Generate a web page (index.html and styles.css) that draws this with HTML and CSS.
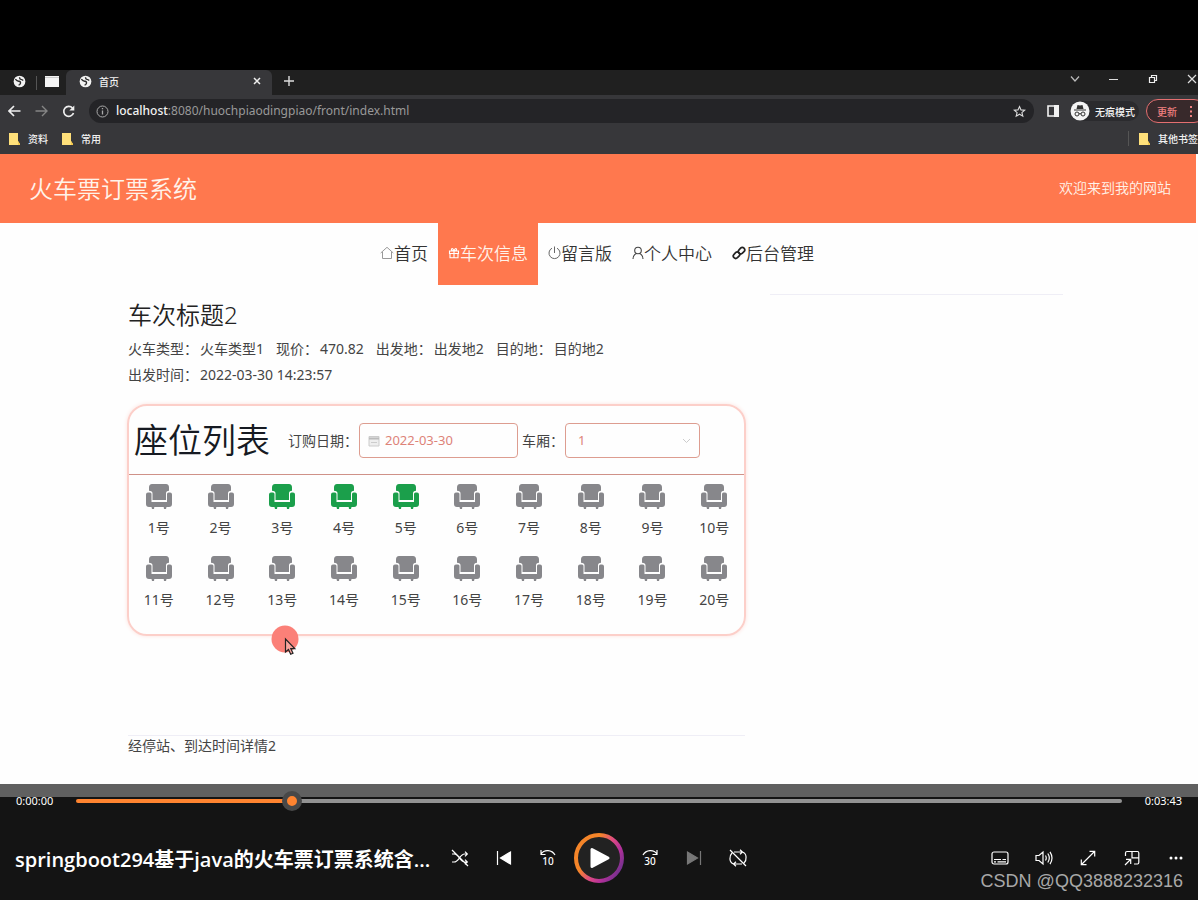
FILE: index.html
```html
<!DOCTYPE html>
<html lang="zh-CN">
<head>
<meta charset="utf-8">
<title>火车票订票系统</title>
<link rel="stylesheet" href="styles.css">
</head>
<body>
<svg class="defs" aria-hidden="true">
  <symbol id="globe" viewBox="0 0 14 14"><circle cx="7" cy="7" r="6.300" fill="#f2f2f2"/><path d="M2.500 4.500q2 2.500 4 2.200 2 .3 1.500 2.300-.5 1.500-2 2M7 2.500q0 2 1.500 2.200T11 6" fill="none" stroke="#2b2b2b" stroke-width="1.500"/></symbol>
  <symbol id="folder" viewBox="0 0 11 13"><path d="M0 1h9v8l2 3v1H0z" fill="#ffe07a"/><path d="M9 9v4h2v-1z" fill="#f5c84c"/></symbol>
  <symbol id="seat" viewBox="0 0 26 25"><path d="M6 0h14q3 0 3 3.500v3.300q-3 0-3 2.700v6.500H6.500V9.500q0-2.700-3.500-2.700V3.500Q3 0 6 0z"/><path d="M2 8.500h2q1.500 0 1.500 1.500v8h15.500v-8q0-1.500 1.500-1.500h1.500q2 0 2 2V20q0 3-3 3h-2.500l-.5 2h-2l-.3-2H8.300L8 25H6l-.5-2H3q-3 0-3-3v-9.500q0-2 2-2z"/></symbol>
</svg>

<div class="letterbox"></div>

<div class="browser">
  <div class="tabs">
    <div class="pinned"><svg width="13" height="13"><use href="#globe"/></svg></div>
    <div class="pinned second"><svg width="14" height="11" viewBox="0 0 14 11"><path d="M0 0h14v11H0z" fill="#f4f4f4"/><path d="M0 1.500h14" stroke="#ccc"/></svg></div>
    <div class="tab"><svg width="13" height="13"><use href="#globe"/></svg><span>首页</span>
      <button class="plain close" aria-label="关闭"><svg width="8" height="8" viewBox="0 0 8 8"><path d="M1 1l6 6M7 1L1 7" stroke="#eee" stroke-width="1.500"/></svg></button></div>
    <button class="plain add" aria-label="新标签页"><svg width="12" height="12" viewBox="0 0 12 12"><path d="M6 1v10M1 6h10" stroke="#ddd" stroke-width="1.400"/></svg></button>
    <div class="window">
      <button class="plain" aria-label="搜索标签"><svg width="10" height="10" viewBox="0 0 10 10"><path d="M1 2.500l4 4.500 4-4.500" fill="none" stroke="#bbb" stroke-width="1.200"/></svg></button>
      <button class="plain" aria-label="最小化"><svg width="10" height="10" viewBox="0 0 10 10"><path d="M0 5.500h9" stroke="#ddd"/></svg></button>
      <button class="plain" aria-label="还原"><svg width="10" height="10" viewBox="0 0 10 10"><path d="M1.500 3.500h5v5h-5zM3.500 3V1.500h5v5H7" fill="none" stroke="#eee" stroke-width="1.200"/></svg></button>
      <button class="plain" aria-label="关闭窗口"><svg width="10" height="10" viewBox="0 0 10 10"><path d="M1 1l8 8M9 1L1 9" stroke="#ddd" stroke-width="1.200"/></svg></button>
    </div>
  </div>
  <div class="toolbar">
    <button class="plain" aria-label="后退"><svg width="13" height="12" viewBox="0 0 13 12"><path d="M12.500 6H1.500M6 1L1 6l5 5" fill="none" stroke="#eee" stroke-width="1.700"/></svg></button>
    <button class="plain" aria-label="前进"><svg width="13" height="12" viewBox="0 0 13 12"><path d="M.5 6h11M7 1l5 5-5 5" fill="none" stroke="#858585" stroke-width="1.400"/></svg></button>
    <button class="plain" aria-label="刷新"><svg width="13" height="13" viewBox="0 0 13 13"><path d="M10.500 3A5 5 0 1 0 11.500 8" fill="none" stroke="#eee" stroke-width="1.700"/><path d="M12.300.5v5H7.300z" fill="#eee"/></svg></button>
    <div class="address">
      <svg width="13" height="13" viewBox="0 0 13 13"><circle cx="6.500" cy="6.500" r="5.500" fill="none" stroke="#aaa"/><path d="M6.500 5.500v4M6.500 3v1.300" stroke="#aaa" stroke-width="1.300"/></svg>
      <span class="url"><b>localhost</b>:8080/huochpiaodingpiao/front/index.html</span>
      <svg width="13" height="13" viewBox="0 0 13 13"><path d="M6.500 1.500l1.500 3.400 3.700.3-2.800 2.400.9 3.600-3.300-2-3.300 2 .9-3.600-2.800-2.400 3.700-.3z" fill="none" stroke="#ddd" stroke-width="1.100"/></svg>
    </div>
    <svg width="12" height="12" viewBox="0 0 12 12"><path d="M1 1h10v10H1z" fill="none" stroke="#f2f2f2" stroke-width="1.600"/><path d="M7 0h5v12H7z" fill="#f2f2f2"/></svg>
    <div class="incognito"><svg width="20" height="20" viewBox="0 0 20 20"><circle cx="10" cy="10" r="9.500" fill="#f4f4f4"/><path d="M6.500 8l1-4 2.500.6L12.500 4l1 4zM4 8.500h12v1H4z" fill="#333"/><path d="M9 13q1-1 2 0" fill="none" stroke="#333"/><circle cx="7" cy="13" r="2" fill="none" stroke="#333"/><circle cx="13" cy="13" r="2" fill="none" stroke="#333"/></svg><span>无痕模式</span></div>
    <button class="update"><span>更新</span><svg width="4" height="13" viewBox="0 0 4 13"><path d="M1 1h2v2H1zM1 5.500h2v2H1zM1 10h2v2H1z" fill="#f08080"/></svg></button>
  </div>
  <div class="bookmarks">
    <a href="#"><svg width="11" height="13"><use href="#folder"/></svg>资料</a>
    <a href="#"><svg width="11" height="13"><use href="#folder"/></svg>常用</a>
    <a href="#" class="other"><svg width="11" height="13"><use href="#folder"/></svg>其他书签</a>
  </div>
</div>

<div class="site">
  <header class="banner"><h1>火车票订票系统</h1><span>欢迎来到我的网站</span></header>
  <nav class="menu">
    <a href="#"><svg width="14" height="14" viewBox="0 0 14 14"><path d="M.7 7L7 1.300 13.300 7M2.500 6v6.500h9V6" fill="none" stroke="#999"/></svg>首页</a>
    <a href="#" class="active"><svg width="12" height="12" viewBox="0 0 12 12"><path d="M1.500 4h9v2.500h-9zM2 6.500h8v4.300H2zM6 4v7M6 4Q3 4 3.500 2 5 .8 6 4 7 .8 8.500 2 9 4 6 4" fill="none" stroke="#fff" stroke-width="1.100"/></svg>车次信息</a>
    <a href="#"><svg width="13" height="14" viewBox="0 0 13 14"><path d="M4 2.200a5.500 5.500 0 1 0 5 0M6.500.5v6.500" fill="none" stroke="#666"/></svg>留言版</a>
    <a href="#"><svg width="12" height="14" viewBox="0 0 12 14"><circle cx="6" cy="4.500" r="3.300" fill="none" stroke="#444" stroke-width="1.100"/><path d="M1 13q0-4 3.500-5.500M11 13q0-4-3.500-5.500" fill="none" stroke="#444" stroke-width="1.100"/></svg>个人中心</a>
    <a href="#"><svg width="14" height="14" viewBox="0 0 14 14"><g fill="none" stroke="#222" stroke-width="1.700"><rect x="6" y="2.300" width="7" height="4.800" rx="2.400" transform="rotate(-45 9.500 4.700)"/><rect x="1" y="6.800" width="7" height="4.800" rx="2.400" transform="rotate(-45 4.500 9.200)"/></g></svg>后台管理</a>
  </nav>
  <main class="content">
    <section class="detail">
      <h2>车次标题2</h2>
      <dl class="facts">
        <div><dt>火车类型：</dt><dd>火车类型1</dd></div>
        <div><dt>现价：</dt><dd>470.82</dd></div>
        <div><dt>出发地：</dt><dd>出发地2</dd></div>
        <div><dt>目的地：</dt><dd>目的地2</dd></div>
        <div class="wide"><dt>出发时间：</dt><dd>2022-03-30 14:23:57</dd></div>
      </dl>
      <div class="card">
        <form class="filters">
          <h3>座位列表</h3>
          <label for="date">订购日期：</label>
          <div class="field date"><svg width="12" height="12" viewBox="0 0 12 12"><path d="M1 1.500h10v9.500H1z" fill="#eee" stroke="#ccc"/><path d="M1 3.500h10" stroke="#bbb" stroke-width="2"/><path d="M3 7.500h6" stroke="#ccc"/></svg><input id="date" type="text" value="2022-03-30"></div>
          <label for="coach">车厢：</label>
          <div class="field coach"><select id="coach"><option>1</option></select><svg width="9" height="6" viewBox="0 0 9 6"><path d="M1 1l3.500 3.500L8 1" fill="none" stroke="#ccc"/></svg></div>
        </form>
        <ol class="seats">
          <li><svg><use href="#seat"/></svg>1号</li><li><svg><use href="#seat"/></svg>2号</li><li class="free"><svg><use href="#seat"/></svg>3号</li><li class="free"><svg><use href="#seat"/></svg>4号</li><li class="free"><svg><use href="#seat"/></svg>5号</li><li><svg><use href="#seat"/></svg>6号</li><li><svg><use href="#seat"/></svg>7号</li><li><svg><use href="#seat"/></svg>8号</li><li><svg><use href="#seat"/></svg>9号</li><li><svg><use href="#seat"/></svg>10号</li>
          <li><svg><use href="#seat"/></svg>11号</li><li><svg><use href="#seat"/></svg>12号</li><li><svg><use href="#seat"/></svg>13号</li><li><svg><use href="#seat"/></svg>14号</li><li><svg><use href="#seat"/></svg>15号</li><li><svg><use href="#seat"/></svg>16号</li><li><svg><use href="#seat"/></svg>17号</li><li><svg><use href="#seat"/></svg>18号</li><li><svg><use href="#seat"/></svg>19号</li><li><svg><use href="#seat"/></svg>20号</li>
        </ol>
        <svg class="pointer" width="28" height="32" viewBox="0 0 28 32"><circle cx="14" cy="14" r="13.500" fill="#fb8078"/><path d="M14.500 14v13l3-2.500 2.200 4.800 2.300-1-2.200-4.600h4z" fill="#f9a49d" stroke="#222" stroke-width="1.200"/></svg>
      </div>
      <p class="stops">经停站、到达时间详情2</p>
    </section>
    <aside class="side"></aside>
  </main>
</div>

<footer class="player">
  <div class="seek">
    <span>0:00:00</span>
    <input type="range" min="0" max="1000" value="201" aria-label="播放进度">
    <span>0:03:43</span>
  </div>
  <div class="controls">
    <div class="title">springboot294基于java的火车票订票系统含...</div>
    <div class="group">
      <button class="plain" aria-label="随机播放"><svg width="18" height="18" viewBox="0 0 18 18"><path d="M1 5h2C8 5 9 13 13.500 13H16M1 13h2C8 13 9 5 13.500 5H16M14 2.700L16.300 5 14 7.300M14 10.700l2.300 2.300-2.300 2.300M1 1l16 16"/></svg></button>
      <button class="plain" aria-label="上一个"><svg width="16" height="16" viewBox="0 0 16 16"><path d="M1.500 1v14"/><path d="M14.500 2v12L4.500 8z" fill="#fff"/></svg></button>
      <button class="plain" aria-label="后退10秒"><svg width="18" height="18" viewBox="0 0 18 18"><path d="M2 1v4.500h4.500M2 5.200C5 0 13 .5 16 6"/><text x="9" y="16">10</text></svg></button>
      <button class="plain play" aria-label="播放"><svg width="50" height="50" viewBox="0 0 50 50"><defs><linearGradient id="ring" x1="0" y1=".2" x2="1" y2=".8"><stop offset=".3" stop-color="#f58529"/><stop offset=".55" stop-color="#dd4a83"/><stop offset=".75" stop-color="#b3309a"/><stop offset="1" stop-color="#6b318c"/></linearGradient></defs><circle cx="25" cy="25" r="23" fill="#222" stroke="url(#ring)" stroke-width="4"/><path d="M18 16.500v17L34 25z" fill="#fff" stroke="#fff" stroke-width="3" stroke-linejoin="round"/></svg></button>
      <button class="plain" aria-label="前进30秒"><svg width="18" height="18" viewBox="0 0 18 18"><path d="M16 1v4.500h-4.500M16 5.200C13 0 5 .5 2 6"/><text x="9" y="16">30</text></svg></button>
      <button class="plain dim" aria-label="下一个"><svg width="16" height="16" viewBox="0 0 16 16"><path d="M14.500 1v14"/><path d="M1.500 2v12l10-6z" fill="#777"/></svg></button>
      <button class="plain" aria-label="重复"><svg width="18" height="18" viewBox="0 0 18 18"><path d="M5 3h8.500M11 .8L13.500 3 11 5.300M13.500 3C18 4.500 18 11 15 14M13 15H4.500M7 12.700L4.500 15 7 17.200M4.500 15C0 13.500 0 7 3 4M1 1l16 16"/></svg></button>
    </div>
    <div class="group end">
      <button class="plain" aria-label="字幕"><svg width="18" height="14" viewBox="0 0 18 14"><rect x="1" y="1" width="16" height="12" rx="2"/><path d="M3 8.500h7M11.500 8.500H15M3 10.800h2M6.500 10.800H15"/></svg></button>
      <button class="plain" aria-label="音量"><svg width="18" height="16" viewBox="0 0 18 16"><path d="M1 5.500h3L8 2v12l-4-3.500H1zM10.500 5.500q1.500 2.500 0 5M12.800 3.500q3 4.500 0 9M15 1.800q4 6.200 0 12.400"/></svg></button>
      <button class="plain" aria-label="全屏"><svg width="16" height="16" viewBox="0 0 16 16"><path d="M1.500 14.500l13-13M9.500 1.300h5.200v5.200M1.300 9.500v5.200h5.200"/></svg></button>
      <button class="plain" aria-label="迷你播放器"><svg width="16" height="16" viewBox="0 0 16 16"><path d="M1.500 6V3q0-1.500 1.500-1.500h10.500q1.300 0 1.300 1.500v9.500q0 1.500-1.300 1.500H10M8 1.500v6.300h6.800M1 15l5.500-5.500M2 9.300h4.700V14"/></svg></button>
      <button class="plain" aria-label="更多"><svg width="14" height="4" viewBox="0 0 14 4"><g fill="#fff" stroke="none"><circle cx="2" cy="2" r="1.500"/><circle cx="7" cy="2" r="1.500"/><circle cx="12" cy="2" r="1.500"/></g></svg></button>
    </div>
  </div>
  <div class="credit">CSDN @QQ3888232316</div>
</footer>
</body>
</html>
```
FILE: styles.css
```css
* { box-sizing: border-box; }
body {
  margin: 0;
  min-height: 100vh;
  display: flex;
  flex-direction: column;
  background: #141414;
  font-family: "Noto Sans", "Noto Sans CJK SC", sans-serif;
  font-size: 14px;
  color: #444;
}
.defs { display: none; }
svg { flex: none; display: block; }
a { color: inherit; text-decoration: none; }
h1, h2, h3, dl, dd, p, ol { margin: 0; padding: 0; font-weight: 400; }
.plain { border: 0; padding: 0; background: none; display: flex; align-items: center; justify-content: center; }
.letterbox { height: 70px; background: #000; }

.browser { background: #37373a; color: #f2f2f2; font-size: 10px; font-weight: 500; overflow: hidden; }
.tabs { display: flex; align-items: center; height: 25px; background: #202020; }
.pinned { padding: 0 0 3px 13px; width: 36px; }
.second { width: 30px; padding-left: 8px; border-left: 1px solid #555; }
.tab { display: flex; align-items: center; gap: 7px; width: 206px; height: 25px; padding: 0 11px 3px 13px; background: #37373a; border-radius: 6px 6px 0 0; }
.close { margin-left: auto; }
.add { margin-left: 11px; padding-bottom: 3px; }
.window { display: flex; align-self: flex-start; gap: 29px; margin-left: auto; height: 18px; margin-right: 1px; }
.toolbar { display: flex; align-items: center; gap: 14px; height: 33px; padding: 0 0 1px 8px; margin-right: -8px; }
.address { flex: 1; display: flex; align-items: center; gap: 7px; height: 24px; padding: 0 8px 0 7px; margin-right: -1px; background: #242427; border-radius: 12px; font-size: 12px; line-height: 20px; }
.url { flex: 1; padding-bottom: 1px; color: #999; font-weight: 400; white-space: nowrap; }
.url b { font-weight: 500; color: #f2f2f2; }
.incognito { display: flex; align-items: center; gap: 5px; margin-left: -3px; white-space: nowrap; background: #2b2b2e; border-radius: 10px; padding-right: 4px; }
.update { display: flex; align-items: center; gap: 12px; margin-left: -7px; width: 60px; height: 24px; padding: 0 10px; border: 1px solid #e46f70; border-radius: 12px; background: #38292b; color: #f08080; font: inherit; white-space: nowrap; }
.bookmarks { display: flex; align-items: center; gap: 14px; height: 26px; padding: 0 0 5px 9px; }
.bookmarks a { display: flex; align-items: center; gap: 8px; white-space: nowrap; }
.bookmarks .other { margin-left: auto; padding-left: 10px; border-left: 1px solid #555; }

.site { flex: 1; background: #fefefe; }
.banner { display: flex; align-items: center; justify-content: space-between; height: 69px; margin-right: 2px; padding: 0 25px 3px 29px; background: #ff784e; color: #fff3ea; }
.banner h1 { font-size: 24px; font-weight: 350; }
.banner span { font-size: 14px; font-weight: 350; }
.menu { display: flex; justify-content: center; height: 62px; padding-right: 4px; font-size: 17px; font-weight: 350; color: #333; }
.menu a { display: flex; align-items: center; padding: 0 10px 3px; }
.menu .active { background: #ff784e; color: #fff3ea; }
.content { display: grid; grid-template-columns: 617fr 293fr; gap: 25px; padding: 9px 135px 24px 128px; }
.side { border-top: 1px solid #efeef6; }
.detail h2 { font-size: 24px; line-height: 36px; padding-top: 3px; font-weight: 350; color: #222; }
.facts { display: flex; flex-wrap: wrap; column-gap: 12px; padding-top: 3px; line-height: 26px; }
.facts div { display: flex; white-space: nowrap; }
.facts dd { margin-left: 2px; }
.facts .wide { width: 100%; }
.card { position: relative; margin: 16px -1px 0; padding-bottom: 15px; border: 2px solid #fccfc9; border-radius: 20px; box-shadow: 0 0 4px #fde2de; }
.filters { display: flex; align-items: center; height: 69px; padding: 0 5px; border-bottom: 1px solid #cf9188; white-space: nowrap; }
.filters h3 { font-size: 34px; font-weight: 350; color: #161a22; margin-right: 18px; padding-bottom: 3px; }
.filters label { margin-right: 1px; }
.field { position: relative; height: 35px; color: #dd8378; }
.field input, .field select { width: 100%; height: 100%; border: 1px solid #dd9d90; border-radius: 4px; background: none; color: inherit; font: inherit; font-size: 13px; appearance: none; }
.date { width: 159px; margin-right: 4px; }
.coach { width: 135px; }
.field input { padding: 0 0 0 25px; }
.field select { padding: 0 12px; }
.field svg { position: absolute; top: 12px; left: 9px; }
.coach svg { left: auto; right: 9px; top: 15px; }
.seats { display: grid; grid-template-columns: repeat(10, 1fr); margin: 0 -1px; list-style: none; }
.seats li { display: flex; flex-direction: column; align-items: center; gap: 8px; height: 72px; padding-top: 9px; line-height: 22px; }
.seats svg { width: 26px; height: 25px; fill: #87878b; }
.seats .free svg { fill: #1b9f4b; }
.pointer { position: absolute; left: 142px; bottom: -23px; }
.stops { margin-top: 99px; border-top: 1px solid #efeef6; line-height: 20px; }

.player { position: relative; height: 116px; background: linear-gradient(#606060 13px, #141414 13px); color: #fff; }
.seek { display: flex; align-items: center; gap: 23px; height: 33px; padding: 0 16px; font-size: 11px; }
.seek input { flex: 1; min-width: 0; height: 20px; margin: 0; appearance: none; background: none; }
.seek input::-webkit-slider-runnable-track { height: 4px; border-radius: 2px; background: linear-gradient(90deg, #ff8430 20%, #929292 20%); }
.seek input::-webkit-slider-thumb { appearance: none; width: 20px; height: 20px; margin-top: -8px; border-radius: 50%; border: 5px solid #484848; background: #ff8430; }
.controls { display: grid; grid-template-columns: 1fr auto 1fr; align-items: center; height: 83px; padding-bottom: 1px; }
.title { padding-left: 15px; font-family: "Open Sans", "Noto Sans CJK SC", sans-serif; font-size: 20px; font-weight: 600; white-space: nowrap; overflow: hidden; }
.group { display: flex; height: 50px; }
.group button { width: 44px; }
.group .play { width: 58px; }
.end { justify-content: flex-end; }
.group svg { fill: none; stroke: #fff; stroke-width: 1.2; }
.group text { font: 500 10px "Noto Sans", sans-serif; fill: #fff; stroke: none; text-anchor: middle; }
.group .dim svg { stroke: #777; }
.credit { position: absolute; right: 15px; bottom: 8px; font: 18px/22px "Liberation Sans", sans-serif; color: #a8a8a8; }
```
